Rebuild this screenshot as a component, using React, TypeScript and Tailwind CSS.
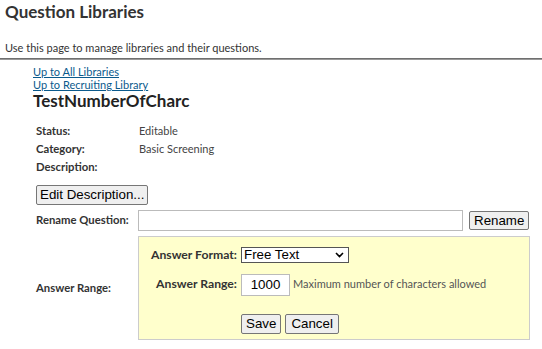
import React from "react";

const lbl = "font-bold text-[11.3px] text-[#333]";
const ilbl = "font-bold text-[12.2px] text-[#333]";
const arial = { fontFamily: "'Liberation Sans', Arial, sans-serif" };
const btn = "border border-[#767676] rounded-[2px] bg-[#efefef] text-[13.33px] text-black leading-none";

export default function App() {
  return (
    <div className="w-[542px] h-[349px] bg-white text-[#333] overflow-hidden" style={{ fontFamily: "Lato, 'Open Sans', sans-serif" }}>
      <div className="pl-[5px] pt-[2px]">
        <h1 className="text-[17px] font-bold leading-[20px] text-[#333]">Question Libraries</h1>
        <p className="mt-[18px] text-[11px] leading-[15px] text-[#333]">Use this page to manage libraries and their questions.</p>
      </div>
      <div className="mt-[3px] h-[1px] bg-[#6f6f6f]" />
      <div className="h-[1px] bg-[#999]" />
      <div className="pl-[33px] pt-[5px]">
        <a href="#" className="block text-[11px] leading-[13px] text-[#0b5a8c] underline">Up to All Libraries</a>
        <a href="#" className="block text-[11px] leading-[13px] text-[#0b5a8c] underline">Up to Recruiting Library</a>
        <div className="text-[17px] font-bold leading-[20px] text-[#222]">TestNumberOfCharc</div>
      </div>
      <div className="pl-[36px] pt-[11px]">
        <div className="flex h-[18px] items-center">
          <span className={`${lbl} w-[103px]`}>Status:</span>
          <span className="text-[11px] text-[#444]">Editable</span>
        </div>
        <div className="flex h-[18px] items-center">
          <span className={`${lbl} w-[103px]`}>Category:</span>
          <span className="text-[11px] text-[#444]">Basic Screening</span>
        </div>
        <div className="flex h-[18px] items-center">
          <span className={lbl}>Description:</span>
        </div>
        <button className={`mt-[9px] h-[20px] px-[3px] ${btn}`} style={arial}>Edit Description...</button>
      </div>
      <div className="flex items-center pl-[36px] mt-[5px]">
        <span className={`${lbl} w-[102px]`}>Rename Question:</span>
        <input className="w-[325px] h-[21px] border border-[#bbb] bg-white" />
        <button className={`ml-[6px] h-[19px] px-[4px] ${btn}`} style={arial}>Rename</button>
      </div>
      <div className="flex items-center pl-[36px] mt-[5px]">
        <span className={`${lbl} w-[102px]`}>Answer Range:</span>
        <div className="w-[392px] h-[104px] bg-[#ffffcc] border border-[#ccc] pt-[9px]">
          <div className="flex items-center">
            <span className={`${ilbl} w-[102px] text-right pr-[4px]`}>Answer Format:</span>
            <div className="relative w-[108px] h-[16px] border border-[#555] bg-white text-[13.33px] text-black leading-[14px] pl-[2px]" style={arial}>
              Free Text
              <svg className="absolute right-[4px] top-[4px]" width="9" height="6" viewBox="0 0 9 6"><path d="M1 1l3.5 3.5L8 1" stroke="#000" strokeWidth="1.6" fill="none" /></svg>
            </div>
          </div>
          <div className="flex items-center mt-[9px]">
            <span className={`${ilbl} w-[102px] text-right pr-[4px]`}>Answer Range:</span>
            <div className="w-[49px] h-[22px] border border-[#bbb] bg-white text-[13.33px] text-black flex items-center justify-center" style={arial}>1000</div>
            <span className="ml-[3px] text-[11px] text-[#555]">Maximum number of characters allowed</span>
          </div>
          <div className="flex gap-[4px] pl-[102px] mt-[18px]">
            <button className={`h-[20px] px-[4px] ${btn}`} style={arial}>Save</button>
            <button className={`h-[20px] px-[5px] ${btn}`} style={arial}>Cancel</button>
          </div>
        </div>
      </div>
    </div>
  );
}
